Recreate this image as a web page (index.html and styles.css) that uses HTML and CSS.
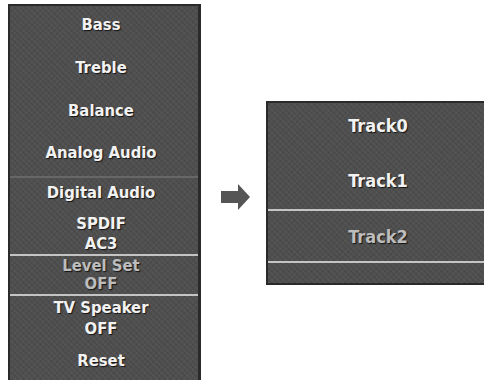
FILE: index.html
```html
<!DOCTYPE html>
<html lang="en">
<head>
  <meta charset="UTF-8" />
  <meta name="viewport" content="width=device-width, initial-scale=1" />
  <title>Audio Menu</title>
  <link rel="stylesheet" href="styles.css">
</head>
<body>

  <div class="menu">
    <div class="item">Bass</div>
    <div class="item">Treble</div>
    <div class="item">Balance</div>
    <div class="item last">Analog Audio</div>
    <div class="item digital">Digital Audio</div>
    <div class="item spdif"><span>SPDIF</span><span>AC3</span></div>
    <div class="item level selected"><span>Level Set</span><span>OFF</span></div>
    <div class="item speaker"><span>TV Speaker</span><span>OFF</span></div>
    <div class="item reset">Reset</div>
  </div>

  <div class="arrow">
    <svg width="29" height="26" viewBox="0 0 29 26">
      <polygon points="0,7 17,7 17,0 29,13 17,26 17,19 0,19" fill="#555" />
    </svg>
  </div>

  <div class="tracks">
    <div class="track first">Track0</div>
    <div class="track second">Track1</div>
    <div class="track selected">Track2</div>
    <div class="track tail"></div>
  </div>

</body>
</html>
```

FILE: styles.css
```css
body {
  margin: 0;
  background: #fff;
  display: flex;
  align-items: flex-start;
  padding-left: 8px;
  overflow: hidden;
  height: 380px;
  font-family: "DejaVu Sans Condensed", "DejaVu Sans", sans-serif;
  font-stretch: condensed;
  font-weight: bold;
  font-size: 16.5px;
}

.menu, .tracks {
  background-color: #4e4e4e;
  background-image:
    repeating-linear-gradient(45deg, rgba(255,255,255,0.035) 0 2px, transparent 2px 4px),
    repeating-linear-gradient(-45deg, rgba(0,0,0,0.05) 0 2px, transparent 2px 4px);
  border: 2px solid #2a2a2a;
  color: #f2f2f2;
  text-shadow: 1px 1px 1px #151515;
  box-sizing: border-box;
  flex-shrink: 0;
}

.menu {
  margin-top: 4px;
  width: 193px;
  height: 390px;
  border-right-width: 3px;
  padding-right: 6px;
}

.item {
  display: flex;
  flex-direction: column;
  justify-content: center;
  align-items: center;
  height: 43px;
  padding-bottom: 6px;
  box-sizing: border-box;
  line-height: 20px;
}
.item.last { border-bottom: 2px solid #676767; margin-right: -6px; padding-right: 6px; }
.item.digital { height: 30px; padding-bottom: 0; }
.item.spdif { height: 48px; padding: 6px 0 0; border-bottom: 2px solid #c4c4c4; margin-right: -6px; padding-right: 6px; }
.item.level { height: 40px; padding: 0 6px 0 0; line-height: 18px; border-bottom: 2px solid #c4c4c4; margin-right: -6px; }
.item.speaker { height: 45px; padding: 0 0 2px; line-height: 21px; }
.item.reset { height: 40px; padding: 0; }

.selected { color: #bdbdbd; }

.arrow {
  margin: 184px 0 0 20px;
  width: 29px;
  height: 26px;
  flex-shrink: 0;
}
.arrow svg { display: block; }

.tracks {
  margin: 101px 0 0 16px;
  width: 224px;
  height: 184px;
  font-size: 18px;
}

.track {
  display: flex;
  justify-content: center;
  align-items: center;
  box-sizing: border-box;
}
.track.first { height: 44px; }
.track.second { height: 64px; padding-top: 4px; border-bottom: 2px solid #c4c4c4; }
.track.selected { height: 52px; border-bottom: 2px solid #c4c4c4; }
.track.tail { height: 18px; }
```
